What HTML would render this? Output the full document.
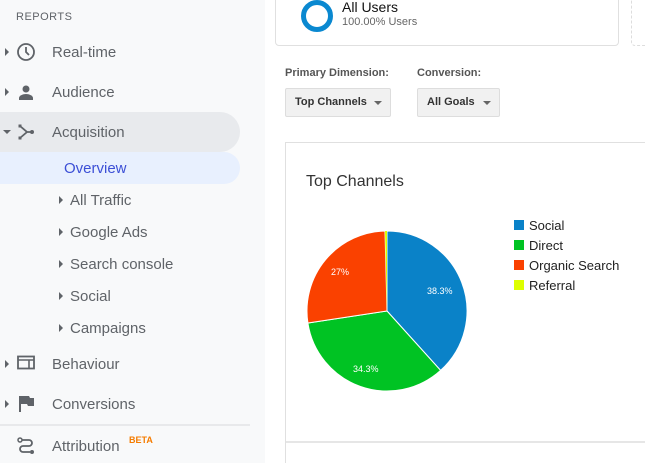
<!DOCTYPE html>
<html style="overflow:hidden;width:645px;height:463px"><head><style>
*{margin:0;padding:0;box-sizing:border-box}
body{width:645px;height:463px;overflow:hidden;background:#fff;font-family:"Liberation Sans",Arial,sans-serif;position:relative}
.sb{position:absolute;left:0;top:0;width:265px;height:463px;background:#f8f9fa}
.t{position:absolute;color:#5f6368;font-size:15px}
.sub{position:absolute;color:#5f6368;font-size:15px;left:70px}
.ar{position:absolute;width:0;height:0;border-top:4px solid transparent;border-bottom:4px solid transparent;border-left:4px solid #5f6368}
.abs{position:absolute}
</style></head><body>
<div class="sb"></div>
<div class="abs" style="left:16px;top:11px;font-size:11px;color:#5f6368;letter-spacing:.5px">REPORTS</div>
<div class="abs" style="left:0;top:112px;width:240px;height:40px;background:#e8eaed;border-radius:0 20px 20px 0"></div>
<div class="abs" style="left:0;top:152px;width:240px;height:32px;background:#e8f0fe;border-radius:0 16px 16px 0"></div>
<div class="ar" style="left:5px;top:48px"></div>
<svg class="abs" style="left:16px;top:42px" width="20" height="20" viewBox="0 0 20 20"><circle cx="10" cy="10" r="8" fill="none" stroke="#5f6368" stroke-width="1.8"/><path d="M10 5v5l3 3" fill="none" stroke="#5f6368" stroke-width="1.8"/></svg>
<div class="t" style="left:52px;top:44px">Real-time</div>
<div class="ar" style="left:5px;top:88px"></div>
<svg class="abs" style="left:17px;top:84px" width="18" height="18" viewBox="0 0 18 18"><circle cx="9" cy="5" r="3.5" fill="#5f6368"/><path d="M2 16v-2c0-2.5 4-4 7-4s7 1.5 7 4v2z" fill="#5f6368"/></svg>
<div class="t" style="left:52px;top:84px">Audience</div>
<div class="abs" style="left:3px;top:130px;width:0;height:0;border-left:4px solid transparent;border-right:4px solid transparent;border-top:4px solid #5f6368"></div>
<svg class="abs" style="left:17px;top:123px" width="18" height="18" viewBox="0 0 18 18"><path d="M3 3l7 6-7 6M10 9h5" fill="none" stroke="#5f6368" stroke-width="1.8"/><circle cx="15" cy="9" r="2" fill="#5f6368"/><rect x="1.5" y="1.5" width="3" height="3" fill="#5f6368"/><rect x="1.5" y="13.5" width="3" height="3" fill="#5f6368"/></svg>
<div class="t" style="left:52px;top:124px">Acquisition</div>
<div class="abs" style="left:64px;top:160px;font-size:15px;color:#3c4fd6">Overview</div>
<div class="ar" style="left:59px;top:196px"></div><div class="sub" style="top:192px">All Traffic</div>
<div class="ar" style="left:59px;top:228px"></div><div class="sub" style="top:224px">Google Ads</div>
<div class="ar" style="left:59px;top:260px"></div><div class="sub" style="top:256px">Search console</div>
<div class="ar" style="left:59px;top:292px"></div><div class="sub" style="top:288px">Social</div>
<div class="ar" style="left:59px;top:324px"></div><div class="sub" style="top:320px">Campaigns</div>
<div class="ar" style="left:5px;top:360px"></div>
<svg class="abs" style="left:17px;top:355px" width="18" height="16" viewBox="0 0 18 16"><rect x="1" y="1.5" width="16" height="12" fill="none" stroke="#5f6368" stroke-width="1.8"/><path d="M1 5h16M12 5v9" stroke="#5f6368" stroke-width="1.6"/></svg>
<div class="t" style="left:52px;top:356px">Behaviour</div>
<div class="ar" style="left:5px;top:400px"></div>
<svg class="abs" style="left:19px;top:395px" width="16" height="18" viewBox="0 0 16 18"><path d="M1 1v16" stroke="#5f6368" stroke-width="2"/><path d="M2 1h8l1 2h4v8H9l-1-2H2z" fill="#5f6368"/></svg>
<div class="t" style="left:52px;top:396px">Conversions</div>
<div class="abs" style="left:0;top:424px;width:250px;height:2px;background:#e8e9eb"></div>
<svg class="abs" style="left:17px;top:437px" width="18" height="18" viewBox="0 0 18 18"><circle cx="3" cy="3" r="2" fill="none" stroke="#5f6368" stroke-width="1.5"/><circle cx="15" cy="15" r="2" fill="#5f6368"/><path d="M5 3h7a3 3 0 010 6H6a3 3 0 000 6h7" fill="none" stroke="#5f6368" stroke-width="1.8"/></svg>
<div class="t" style="left:52px;top:438px">Attribution</div>
<div class="abs" style="left:129px;top:435px;font-size:9px;font-weight:bold;color:#f57c00">BETA</div>

<div class="abs" style="left:275px;top:-10px;width:344px;height:56px;border:1px solid #e0e0e0;border-radius:4px"></div>
<div class="abs" style="left:631px;top:-10px;width:30px;height:56px;border:1px dashed #ddd;border-radius:4px"></div>
<div class="abs" style="left:301px;top:0;width:32px;height:32px;border:5px solid #0a88d0;border-radius:50%"></div>
<div class="abs" style="left:342px;top:-1px;font-size:14px;color:#111">All Users</div>
<div class="abs" style="left:342px;top:16px;font-size:11px;color:#666">100.00% Users</div>
<div class="abs" style="left:285px;top:67px;font-size:11px;font-weight:bold;color:#555">Primary Dimension:</div>
<div class="abs" style="left:417px;top:67px;font-size:11px;font-weight:bold;color:#555">Conversion:</div>
<div class="abs" style="left:285px;top:88px;width:106px;height:29px;background:#f1f1f1;border:1px solid #ddd;border-radius:2px;font-size:11px;font-weight:bold;color:#333;padding:7px 0 0 9px">Top Channels</div>
<div class="abs" style="left:374px;top:101px;border-left:4px solid transparent;border-right:4px solid transparent;border-top:4px solid #666"></div>
<div class="abs" style="left:417px;top:88px;width:83px;height:29px;background:#f1f1f1;border:1px solid #ddd;border-radius:2px;font-size:11px;font-weight:bold;color:#333;padding:7px 0 0 9px">All Goals</div>
<div class="abs" style="left:483px;top:101px;border-left:4px solid transparent;border-right:4px solid transparent;border-top:4px solid #666"></div>
<div class="abs" style="left:285px;top:142px;width:400px;height:321px;border:1px solid #e0e0e0;border-bottom:none"></div>
<div class="abs" style="left:286px;top:441px;width:370px;height:2px;background:#e6e6e6"></div>
<div class="abs" style="left:306px;top:173px;font-size:16px;color:#333">Top Channels</div>
<svg class="abs" style="left:0;top:0" width="645" height="463">
<path d="M387 311L387 231A80 80 0 0 1 440.6 370.4Z" fill="#0a82c8" stroke="#fff" stroke-width="1"/>
<path d="M387 311L440.6 370.4A80 80 0 0 1 307.9 323Z" fill="#00c323" stroke="#fff" stroke-width="1"/>
<path d="M387 311L307.9 323A80 80 0 0 1 385 231Z" fill="#fa4100" stroke="#fff" stroke-width="1"/>
<path d="M387 311L385 231A80 80 0 0 1 387 231Z" fill="#ddff00"/>
<g font-family="Liberation Sans,Arial,sans-serif" font-size="9" fill="#fff">
<text x="427" y="294">38.3%</text><text x="353" y="372">34.3%</text><text x="331" y="275">27%</text></g>
<g font-family="Liberation Sans,Arial,sans-serif" font-size="13" fill="#222">
<rect x="514" y="220" width="10" height="10" fill="#0a82c8"/><text x="529" y="230">Social</text>
<rect x="514" y="240" width="10" height="10" fill="#00c323"/><text x="529" y="250">Direct</text>
<rect x="514" y="260" width="10" height="10" fill="#fa4100"/><text x="529" y="270">Organic Search</text>
<rect x="514" y="280" width="10" height="10" fill="#ddff00"/><text x="529" y="290">Referral</text></g>
</svg>
</body></html>
